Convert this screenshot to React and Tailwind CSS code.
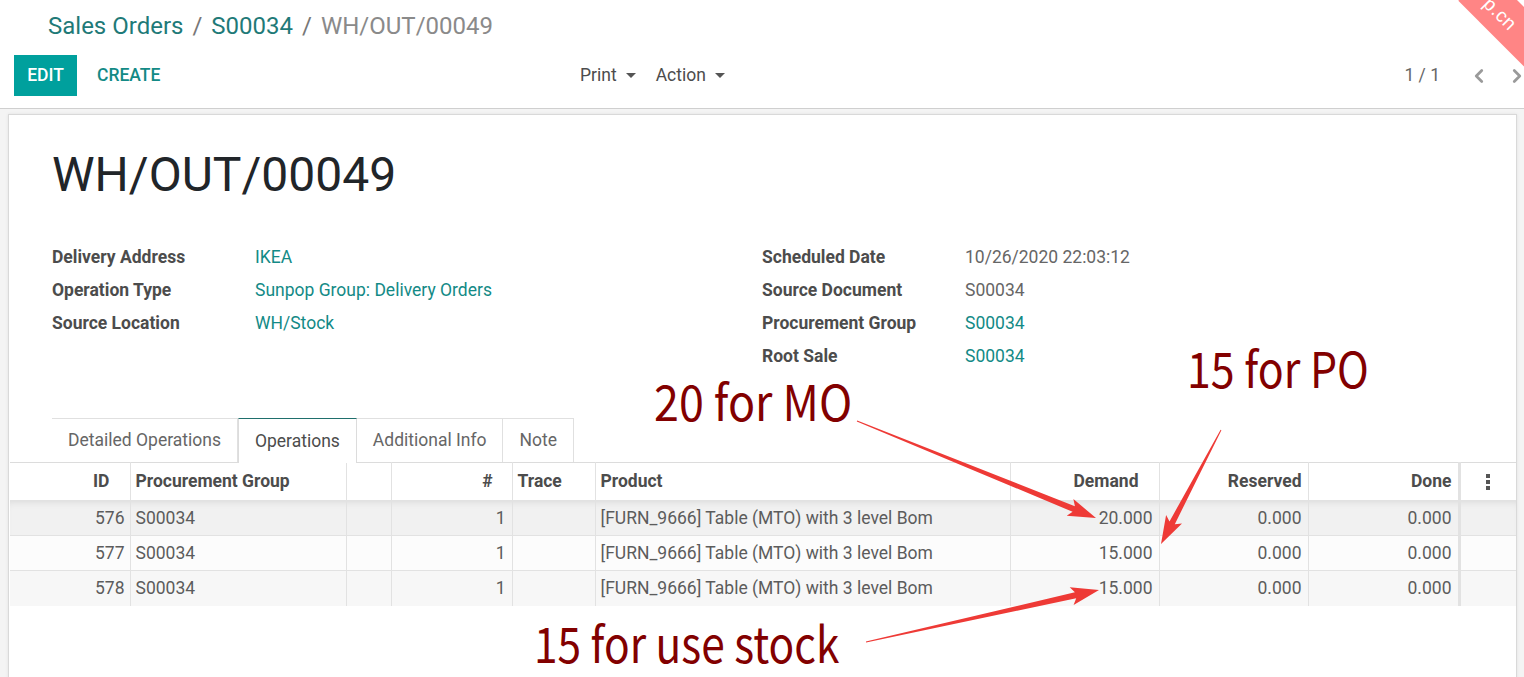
import { ChevronLeft, ChevronRight } from 'lucide-react'


/* -------------------- DATA -------------------- */

const leftFields = [
  { label: 'Delivery Address', value: 'IKEA', link: true },
  { label: 'Operation Type', value: 'Sunpop Group: Delivery Orders', link: true },
  { label: 'Source Location', value: 'WH/Stock', link: true }
]

const rightFields = [
  { label: 'Scheduled Date', value: '10/26/2020 22:03:12', link: false },
  { label: 'Source Document', value: 'S00034', link: false },
  { label: 'Procurement Group', value: 'S00034', link: true },
  { label: 'Root Sale', value: 'S00034', link: true }
]

const tabs = ['Detailed Operations', 'Operations', 'Additional Info', 'Note']

const rows = [
  { id: 576, demand: '20.000', bg: 'bg-[#f1f1f1] shadow-[inset_0_6px_8px_-6px_rgba(0,0,0,0.12)]' },
  { id: 577, demand: '15.000', bg: 'bg-[#fcfcfc]' },
  { id: 578, demand: '15.000', bg: 'bg-[#f7f7f7]' }
]


/* -------------------- ANNOTATION ARROW -------------------- */

function arrowPoints(x1, y1, x2, y2){

  const dx = x2 - x1
  const dy = y2 - y1
  const len = Math.sqrt(dx * dx + dy * dy)
  const ux = dx / len
  const uy = dy / len
  const nx = -uy
  const ny = ux

  const headLen = 24
  const headW = 9
  const shaftW = 3
  const bx = x2 - ux * headLen
  const by = y2 - uy * headLen

  const p = [
    [x1 + nx * 0.5, y1 + ny * 0.5],
    [bx + nx * shaftW, by + ny * shaftW],
    [bx + nx * headW - ux * 4, by + ny * headW - uy * 4],
    [x2, y2],
    [bx - nx * headW - ux * 4, by - ny * headW - uy * 4],
    [bx - nx * shaftW, by - ny * shaftW],
    [x1 - nx * 0.5, y1 - ny * 0.5]
  ]

  return p.map(q => q[0].toFixed(1) + ',' + q[1].toFixed(1)).join(' ')

}

function Annotations(){

  return (
    <div className="absolute inset-0 pointer-events-none">

      <svg width="1524" height="677" className="absolute left-0 top-0">
        <polygon points={arrowPoints(857, 421, 1096, 518)} fill="#ee3a36" />
        <polygon points={arrowPoints(1221, 430, 1161, 544)} fill="#ee3a36" />
        <polygon points={arrowPoints(866, 642, 1099, 590)} fill="#ee3a36" />
      </svg>

      <span className="absolute left-[654px] top-[372px] origin-left scale-x-[0.915] whitespace-nowrap text-[49px] leading-[56px] text-[#820000] font-['Noto_Sans_CJK_SC',sans-serif]">
        20 for MO
      </span>

      <span className="absolute left-[1187px] top-[339px] origin-left scale-x-[0.875] whitespace-nowrap text-[49px] leading-[56px] text-[#820000] font-['Noto_Sans_CJK_SC',sans-serif]">
        15 for PO
      </span>

      <span className="absolute left-[534px] top-[614px] origin-left scale-x-[0.866] whitespace-nowrap text-[49px] leading-[56px] text-[#820000] font-['Noto_Sans_CJK_SC',sans-serif]">
        15 for use stock
      </span>

    </div>
  )

}


/* -------------------- WATERMARK -------------------- */

function Watermark(){

  return (
    <div className="absolute right-0 top-0 w-[80px] h-[80px] overflow-hidden pointer-events-none">
      <div className="absolute left-[44px] top-[-29px] w-[140px] h-[42px] bg-[#ff8585] rotate-45 origin-top-left flex items-center pl-[20px]">
        <span className="text-white text-[19px] leading-none font-['Liberation_Sans',sans-serif] tracking-wide">p.cn</span>
      </div>
    </div>
  )

}


/* -------------------- CONTROL PANEL -------------------- */

function ControlPanel(){

  return (
    <div className="bg-white border-b border-[#cfcfcf] h-[109px]">

      <div className="pl-[48px] pt-[12px] text-[24px] leading-[28px]">
        <span className="text-[#1f7a78]">Sales Orders</span>
        <span className="text-[#777] px-[9px]">/</span>
        <span className="text-[#1f7a78]">S00034</span>
        <span className="text-[#777] px-[9px]">/</span>
        <span className="text-[#8a8a8a]">WH/OUT/00049</span>
      </div>

      <div className="flex items-center mt-[15px] h-[41px]">

        <div className="w-[566px] flex items-center pl-[14px]">
          <button className="h-[41px] w-[63px] bg-[#00a09d] text-white text-[17.5px] font-medium">
            EDIT
          </button>
          <button className="ml-[20px] text-[#138a86] text-[17.5px] font-medium">
            CREATE
          </button>
        </div>

        <div className="flex items-center text-[17.5px] text-[#4c4c4c]">
          <span className="px-[14px]">Print</span>
          <span className="-ml-[5px] border-x-[5px] border-x-transparent border-t-[5px] border-t-[#555]"></span>
          <span className="pl-[20px] pr-[9px]">Action</span>
          <span className="border-x-[5px] border-x-transparent border-t-[5px] border-t-[#555]"></span>
        </div>

        <div className="ml-auto flex items-center text-[17.5px] text-[#666]">
          <span className="mr-[28px]">1 / 1</span>
          <ChevronLeft size={22} strokeWidth={3} className="text-[#9a9a9a] mr-[16px]" />
          <ChevronRight size={22} strokeWidth={3} className="text-[#9a9a9a] -mr-[4px]" />
        </div>

      </div>

    </div>
  )

}


/* -------------------- FIELD GROUP -------------------- */

function FieldGroup({fields, className}){

  return (
    <div className={className}>
      {fields.map(f => (
        <div key={f.label} className="flex h-[33px] items-center text-[17.5px]">
          <span className="w-[203px] font-bold text-[#4c4c4c]">{f.label}</span>
          <span className={f.link ? 'text-[#138a86]' : 'text-[#666]'}>{f.value}</span>
        </div>
      ))}
    </div>
  )

}


/* -------------------- MOVES TABLE -------------------- */

function MovesTable(){

  const th = 'h-[38px] font-bold text-[#4c4c4c] border-r border-[#e2e2e2]'
  const td = 'h-[35px] text-[#5c5c5c] border-r border-t border-[#e2e2e2]'

  return (
    <table className="table-fixed border-collapse ml-[1px] w-[1506px] text-[17.5px]">

      <colgroup>
        <col className="w-[120px]" />
        <col className="w-[216px]" />
        <col className="w-[45px]" />
        <col className="w-[121px]" />
        <col className="w-[83px]" />
        <col className="w-[415px]" />
        <col className="w-[149px]" />
        <col className="w-[149px]" />
        <col className="w-[151px]" />
        <col className="w-[57px]" />
      </colgroup>

      <thead>
        <tr className="border-t border-[#dcdcdc] bg-white">
          <th className={th + ' text-right pr-[20px]'}>ID</th>
          <th className={th + ' text-left pl-[5px]'}>Procurement Group</th>
          <th className={th}></th>
          <th className={th + ' text-right pr-[19px]'}>#</th>
          <th className={th + ' text-left pl-[5px]'}>Trace</th>
          <th className={th + ' text-left pl-[5px]'}>Product</th>
          <th className={th + ' text-right pr-[20px]'}>Demand</th>
          <th className={th + ' text-right pr-[6px]'}>Reserved</th>
          <th className={th + ' text-right pr-[6px] border-r-[3px]'}>Done</th>
          <th className="h-[38px] pl-[25px]">
            <div className="flex flex-col gap-[2px] items-start">
              <span className="w-[4px] h-[4px] bg-[#555]"></span>
              <span className="w-[4px] h-[4px] bg-[#555]"></span>
              <span className="w-[4px] h-[4px] bg-[#555]"></span>
            </div>
          </th>
        </tr>
      </thead>

      <tbody>
        {rows.map(r => (
          <tr key={r.id} className={r.bg}>
            <td className={td + ' text-right pr-[5px]'}>{r.id}</td>
            <td className={td + ' pl-[5px]'}>S00034</td>
            <td className={td}></td>
            <td className={td + ' text-right pr-[6px]'}>1</td>
            <td className={td}></td>
            <td className={td + ' pl-[5px]'}>[FURN_9666] Table (MTO) with 3 level Bom</td>
            <td className={td + ' text-right pr-[6px]'}>{r.demand}</td>
            <td className={td + ' text-right pr-[6px]'}>0.000</td>
            <td className={td + ' text-right pr-[6px] border-r-[3px]'}>0.000</td>
            <td className="h-[35px] border-t border-[#e2e2e2]"></td>
          </tr>
        ))}
      </tbody>

    </table>
  )

}


/* ========================================================= */
/* ===================== MAIN COMPONENT ==================== */
/* ========================================================= */

export default function App(){

  return (
    <main className="relative w-[1524px] h-[677px] overflow-hidden bg-[#f4f4f4] font-['Roboto',sans-serif]">

      <ControlPanel />

      <div className="ml-[8px] mr-[7px] mt-[5px] h-[600px] bg-white border border-[#d9d9d9] shadow-[0_0_3px_rgba(0,0,0,0.08)]">

        <h1 className="pl-[43px] pt-[32px] text-[48px] leading-[56px] text-[#212529] font-normal">
          WH/OUT/00049
        </h1>

        <div className="flex pl-[43px] mt-[38px]">
          <FieldGroup fields={leftFields} className="w-[710px]" />
          <FieldGroup fields={rightFields} />
        </div>

        <div className="flex pl-[43px] mt-[45px] text-[17.5px] text-[#666]">
          {tabs.map(t => (
            <div
              key={t}
              className={
                t === 'Operations'
                  ? 'h-[45px] px-[16px] flex items-center border-t border-t-[#1f6f6c] border-x border-x-[#dcdcdc] bg-white text-[#4c4c4c] -mb-[1px] relative'
                  : 'h-[44px] px-[16px] flex items-center border-t border-r border-[#e0e0e0]'
              }
            >
              {t}
            </div>
          ))}
        </div>

        <MovesTable />

      </div>

      <Annotations />

      <Watermark />

    </main>
  )

}
